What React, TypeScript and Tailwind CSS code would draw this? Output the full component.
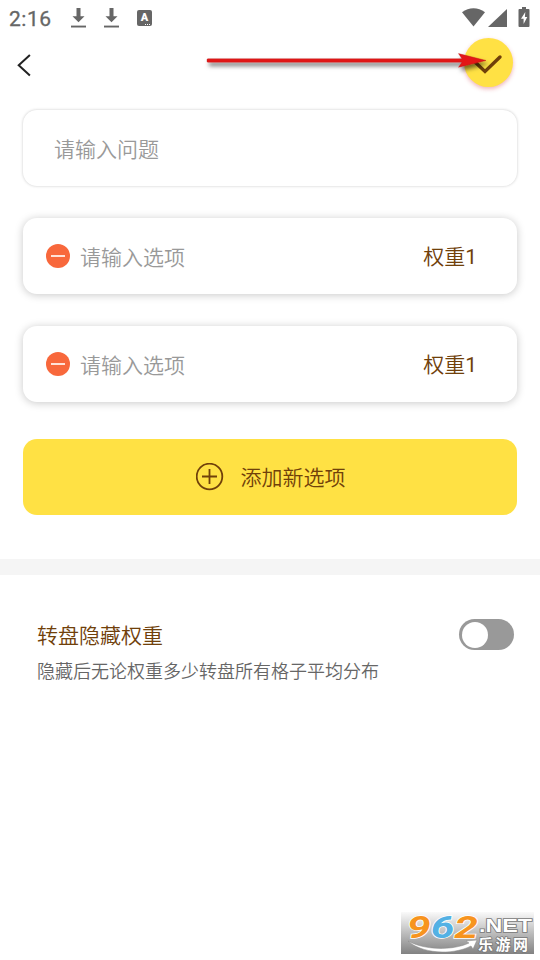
import React from "react";

function DownloadIcon() {
  return (
    <svg width="15" height="20" viewBox="0 0 15 20" fill="#666">
      <path d="M5.500 0h4v8.300h4L7.500 14.300 1.500 8.300h4z" />
      <path d="M0 17.600h15v1.900H0z" />
    </svg>
  );
}

function StatusBar() {
  return (
    <div className="flex h-9 items-start justify-between pl-[9px] pr-[10px] text-[#666]">
      <div className="flex items-start">
        <span className="mt-[7px] w-[62px] font-[Roboto,sans-serif] text-[21px] font-[450] leading-6 tracking-[0.5px] [-webkit-text-stroke:0.3px_#666]">2:16</span>
        <span className="mt-[8px] flex gap-[18px]">
          <DownloadIcon />
          <DownloadIcon />
        </span>
        <span className="relative ml-[18px] mt-[10px] flex h-[16px] w-[15px] justify-center rounded-[2px] bg-[#666] pt-[2px] font-[Roboto,sans-serif] text-[11px] font-black leading-[11px] text-white">
          A
          <svg className="absolute bottom-[1px] right-[1px]" width="6" height="1" fill="#fff">
            <path d="M0 0h1v1H0zM2 0h1v1H2zM4 0h1v1H4z" />
          </svg>
        </span>
      </div>
      <div className="flex items-start">
        <svg className="mt-[8px]" width="23" height="19" viewBox="0 0 23 19" fill="#666">
          <path d="M0 4.200C7-1.200 16-1.200 23 4.200L11.500 18.500z" />
        </svg>
        <svg className="ml-[3px] mt-[9px]" width="19" height="18" viewBox="0 0 19 18" fill="#666">
          <path d="M19 0v18H0z" />
        </svg>
        <svg className="ml-[11px] mt-[7px]" width="12" height="20" viewBox="0 0 12 20">
          <path d="M4 0h4v2h2.600q.9 0 .9.9v16.200q0 .9-.9.9H1.400q-.9 0-.9-.9V2.900q0-.9.9-.9H4z" fill="#666" />
          <path d="M7.300 5 3 11.800h2.600V17L9.300 9.900H6.900z" fill="#fff" />
        </svg>
      </div>
    </div>
  );
}

function Header() {
  return (
    <div className="relative flex h-[74px] items-start justify-between pl-[17px] pr-[27px]">
      <svg className="mt-[18px]" width="15" height="23" viewBox="0 0 15 23" fill="none" stroke="#222" strokeWidth="2">
        <path d="M12.900.9 1.700 11.200l11.200 10.400" />
      </svg>
      <button className="mt-[2px] h-[49px] w-[49px] rounded-full bg-[#ffe144] shadow-[0_2px_4px_rgba(220,90,100,0.45)]">
        <svg width="49" height="49" viewBox="0 0 49 49" fill="none" stroke="#70400a" strokeWidth="3.400" strokeLinecap="round">
          <path d="m11.500 24.500 9.500 9 15-14.500" />
        </svg>
      </button>
      <svg className="absolute left-[200px] top-[12px]" width="295" height="28" viewBox="0 0 295 28">
        <defs>
          <filter id="arrowShadow" x="-5%" y="-50%" width="110%" height="250%">
            <feDropShadow dx="2" dy="3.500" stdDeviation="2" floodColor="#000" floodOpacity=".55" />
          </filter>
        </defs>
        <path d="M7 11.300 8 10.800h254L258.500 5.600 286 12.500l-27.500 6.700 3.500-5H8l-1-.5z" fill="#e31215" stroke="#b91a1a" strokeWidth=".4" filter="url(#arrowShadow)" />
      </svg>
    </div>
  );
}

function OptionRow() {
  return (
    <div className="flex h-[76px] items-center rounded-[14px] bg-white pl-[23px] pr-[40px] shadow-[0_1px_8px_rgba(0,0,0,0.22)]">
      <span className="flex h-6 w-6 items-center justify-center rounded-full bg-[#f8683c]">
        <span className="h-[2px] w-[14px] bg-[#ffe2d8]" />
      </span>
      <span className="ml-[10px] flex-1 text-[#999]">请输入选项</span>
      <span className="text-[#70400a]">权重<span className="font-[Roboto,sans-serif] font-normal">1</span></span>
    </div>
  );
}

function Watermark() {
  return (
    <svg className="absolute left-[401px] top-[912px]" width="133" height="42" viewBox="0 0 133 42">
      <defs>
        <linearGradient id="markBg" x1="0" y1="0" x2="0" y2="1">
          <stop offset="0" stopColor="#fafafa" />
          <stop offset=".5" stopColor="#bdbdbd" />
          <stop offset="1" stopColor="#828282" />
        </linearGradient>
      </defs>
      <path d="M0 0h133v42H0z" fill="url(#markBg)" />
      <g transform="translate(6 25.500) scale(1.330 1)" fontFamily="Roboto, sans-serif" fontWeight="700" fontStyle="italic" fontSize="32" stroke="#fff" strokeWidth="1.500" paintOrder="stroke">
        <text x="0" y="0">
          <tspan fill="#f7941e">9</tspan>
          <tspan fill="#53b1e4">6</tspan>
          <tspan fill="#f7941e">2</tspan>
        </text>
      </g>
      <path d="M7 29c16 9 44 10 61 2l-3-2 11-1-4 9-2-3c-20 10-50 7-63-5z" fill="#fff" stroke="#888" strokeWidth=".5" />
      <text x="78" y="19.500" textLength="53" lengthAdjust="spacingAndGlyphs" fontFamily="Liberation Sans, sans-serif" fontWeight="700" fontSize="18.500" fill="#fff" stroke="#777" strokeWidth="1.500" paintOrder="stroke">.NET</text>
      <text x="77" y="37.500" textLength="50" fontFamily="Noto Sans CJK SC, sans-serif" fontWeight="700" fontSize="15" fill="#fff" stroke="#777" strokeWidth="1.500" paintOrder="stroke">乐游网</text>
    </svg>
  );
}

export default function App() {
  return (
    <div className="relative h-[960px] w-[540px] overflow-hidden bg-white font-['Noto_Sans_CJK_SC',sans-serif] text-[21px] font-[350] leading-[30px]">
      <StatusBar />
      <Header />
      <div className="flex flex-col gap-8 px-[23px]">
        <div className="flex h-[76px] items-center rounded-[14px] bg-white px-[31px] text-[#999] shadow-[0_0_3px_rgba(0,0,0,0.22)]">请输入问题</div>
        <OptionRow />
        <OptionRow />
      </div>
      <div className="px-[23px] pt-[37px]">
        <button className="flex h-[76px] w-full items-center justify-center rounded-[14px] bg-[#ffe144] pl-px text-[#70400a]">
          <svg className="mr-[17px]" width="28" height="28" viewBox="0 0 28 28" fill="none" stroke="#70400a" strokeWidth="1.800">
            <circle cx="13.500" cy="13.500" r="12.800" />
            <path d="M13.500 6v15M6 13.500h15" />
          </svg>
          <span className="-mt-[2px]">添加新选项</span>
        </button>
      </div>
      <div className="mt-11 h-4 bg-[#f5f5f5]" />
      <div className="flex justify-between pl-[37px] pr-[26px] pt-[44px]">
        <div>
          <div className="text-[#70400a]">转盘隐藏权重</div>
          <div className="mt-2 text-[18px] leading-[26px] text-[#666]">隐藏后无论权重多少转盘所有格子平均分布</div>
        </div>
        <span className="flex h-[31px] w-[55px] items-center rounded-full bg-[#999] pl-[3px]">
          <span className="h-[26px] w-[26px] rounded-full bg-white" />
        </span>
      </div>
      <Watermark />
    </div>
  );
}
